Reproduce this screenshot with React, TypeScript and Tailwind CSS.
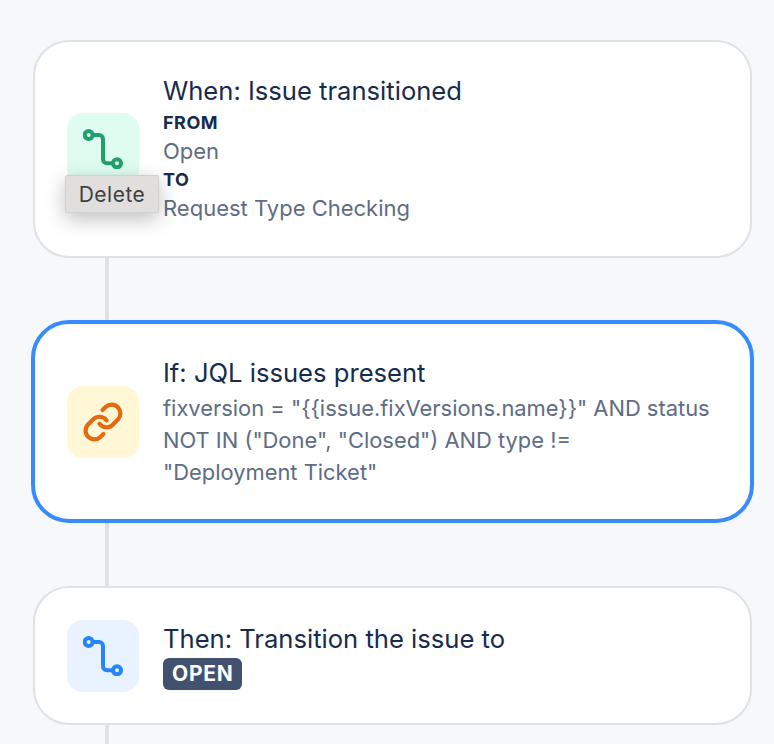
import { Link } from "lucide-react";

function RouteIcon({ color }: { color: string }) {
    return (
        <svg width="40" height="40" viewBox="0 0 40 40" fill="none" stroke={color} strokeWidth="4" strokeLinecap="round" strokeLinejoin="round">
            <circle cx="5.7" cy="6" r="4" />
            <circle cx="34" cy="34.3" r="4" />
            <path d="M10 6H16C18.2 6 20 7.8 20 10V30.3C20 32.5 21.8 34.3 24 34.3H29.8" />
        </svg>
    );
}

function Connector({ height }: { height: string }) {
    return <div className={`ml-[105px] w-[4px] bg-[#dfe1e6] ${height}`} />;
}

export default function App() {
    return (
        <div className="w-[774px] h-[744px] overflow-hidden bg-[#f7f8f9] pt-[40px] font-['Inter',sans-serif] text-[#172b4d]">
            {/* trigger */}
            <div className="ml-[33px] w-[719px] h-[218px] flex items-center gap-[24px] pl-[32px] pr-[24px] bg-white border-2 border-[#dfe1e6] rounded-[36px]">
                <div className="relative shrink-0 w-[72px] h-[72px] rounded-[16px] bg-[#dffcf0] flex items-center justify-center">
                    <RouteIcon color="#22a06b" />
                    <div className="absolute left-[-2px] top-[62px] w-[94px] h-[38px] pt-[2px] flex items-center justify-center rounded-[2px] bg-[#e0dfdd] border border-[#d2d1cf] text-[#3f3f3f] text-[21px] tracking-[0.5px] shadow-[0_6px_20px_rgba(0,0,0,0.25)]">
                        Delete
                    </div>
                </div>
                <div className="flex flex-col">
                    <div className="text-[25.6px] leading-[36px]">When: Issue transitioned</div>
                    <div className="text-[18px] leading-[23px] font-bold tracking-[0.5px] mt-[2px]">FROM</div>
                    <div className="text-[22px] leading-[34px] text-[#5e6c84]">Open</div>
                    <div className="text-[18px] leading-[23px] font-bold tracking-[0.5px]">TO</div>
                    <div className="text-[22px] leading-[34px] text-[#5e6c84]">Request Type Checking</div>
                </div>
            </div>
            <Connector height="h-[62px]" />
            {/* condition */}
            <div className="ml-[31px] w-[723px] h-[203px] flex items-center gap-[24px] pl-[32px] pr-[24px] bg-white border-[4px] border-[#388bff] rounded-[38px]">
                <div className="shrink-0 w-[72px] h-[72px] rounded-[16px] bg-[#fff7d6] flex items-center justify-center">
                    <Link size={42} color="#e56910" strokeWidth={2.4} />
                </div>
                <div className="flex flex-col">
                    <div className="text-[25.6px] leading-[36px] mb-[1px]">If: JQL issues present</div>
                    <div className="text-[21.9px] leading-[32px] text-[#5e6c84]">
                        fixversion = "{"{{"}issue.fixVersions.name{"}}"}" AND status
                        <br />
                        NOT IN ("Done", "Closed") AND type !=
                        <br />
                        "Deployment Ticket"
                    </div>
                </div>
            </div>
            <Connector height="h-[63px]" />
            {/* action */}
            <div className="ml-[33px] w-[719px] h-[139px] flex items-center gap-[24px] pl-[32px] pr-[24px] bg-white border-2 border-[#dfe1e6] rounded-[36px]">
                <div className="shrink-0 w-[72px] h-[72px] rounded-[16px] bg-[#e9f2ff] flex items-center justify-center">
                    <RouteIcon color="#2684ff" />
                </div>
                <div className="flex flex-col items-start">
                    <div className="text-[25.6px] leading-[34px]">Then: Transition the issue to</div>
                    <div className="mt-[2px] h-[32px] px-[9px] flex items-center rounded-[6px] bg-[#42526e] text-white text-[21px] font-bold tracking-[0.7px]">OPEN</div>
                </div>
            </div>
            <Connector height="h-[62px]" />
        </div>
    );
}
